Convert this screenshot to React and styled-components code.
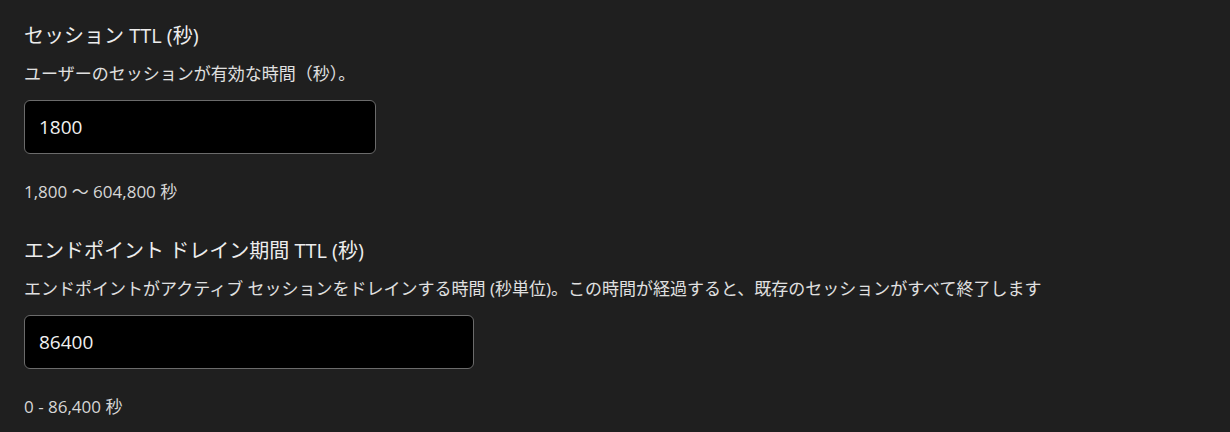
import React from "react";
import styled, { createGlobalStyle } from "styled-components";

const GlobalStyle = createGlobalStyle`
  html, body {
    margin: 0;
    padding: 0;
    background-color: #1f1f1f;
  }
  body {
    font-family: "Open Sans", "Noto Sans CJK JP", sans-serif;
    color: #e6e6e6;
  }
`;

const Page = styled.div`
  min-height: 432px;
  padding: 22px 24px 0;
  display: flex;
  flex-direction: column;
  gap: 35px;
  box-sizing: border-box;
`;

const Field = styled.section`
  display: flex;
  flex-direction: column;
  align-items: flex-start;
`;

const Label = styled.label`
  font-size: 20px;
  line-height: 28px;
  color: #ededed;
`;

const Description = styled.p`
  margin: 13px 0 0;
  font-size: 17px;
  line-height: 22px;
  color: #e0e0e0;
`;

const Input = styled.input`
  box-sizing: border-box;
  width: ${(p) => p.$width}px;
  height: 54px;
  margin-top: 15px;
  padding: 0 14px;
  background-color: #000;
  border: 1px solid #6b6b6b;
  border-radius: 6px;
  color: #f0f0f0;
  font-family: "Open Sans", "Noto Sans CJK JP", sans-serif;
  font-size: 19px;
  outline: none;
`;

const Hint = styled.div`
  margin-top: 28px;
  font-size: 17px;
  line-height: 20px;
  color: #d6d6d6;
`;

const fields = [
  {
    label: "セッション TTL (秒)",
    description: "ユーザーのセッションが有効な時間（秒）。",
    value: "1800",
    width: 352,
    hint: "1,800 ～ 604,800 秒",
  },
  {
    label: "エンドポイント ドレイン期間 TTL (秒)",
    description:
      "エンドポイントがアクティブ セッションをドレインする時間 (秒単位)。この時間が経過すると、既存のセッションがすべて終了します",
    value: "86400",
    width: 450,
    hint: "0 - 86,400 秒",
  },
];

export default function App() {
  return (
    <>
      <GlobalStyle />
      <Page>
        {fields.map((f) => (
          <Field key={f.label}>
            <Label>{f.label}</Label>
            <Description>{f.description}</Description>
            <Input $width={f.width} defaultValue={f.value} />
            <Hint>{f.hint}</Hint>
          </Field>
        ))}
      </Page>
    </>
  );
}
